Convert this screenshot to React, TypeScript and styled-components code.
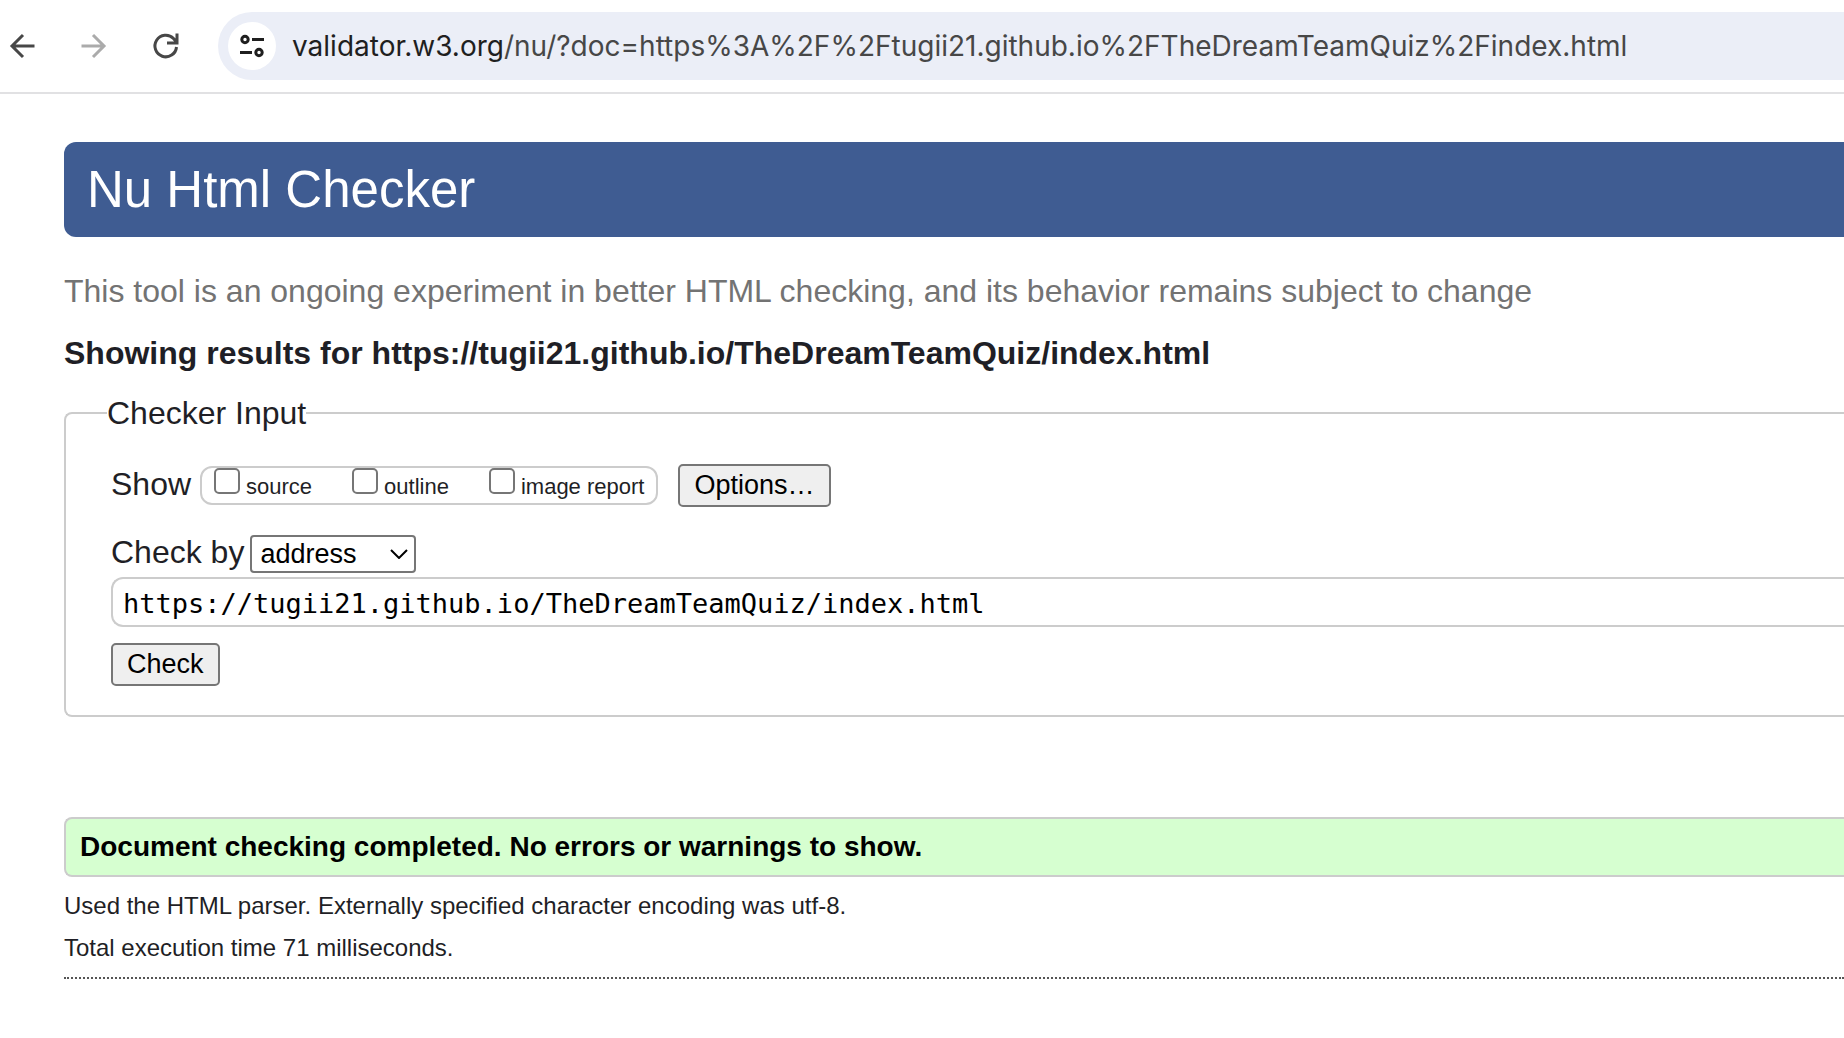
import React from 'react';
import styled, { createGlobalStyle } from 'styled-components';

const GlobalStyle = createGlobalStyle`
  * { box-sizing: border-box; }
  body {
    margin: 0;
    background: #fff;
    color: #1f1f26;
    font-family: "Liberation Sans", Arial, Helvetica, sans-serif;
    font-size: 32px;
    overflow-x: hidden;
  }
`;

const Toolbar = styled.header`
  display: flex;
  align-items: center;
  height: 94px;
  padding-left: 4px;
  border-bottom: 2px solid #e1e1e3;
`;

const Nav = styled.nav`
  display: flex;
  gap: 36px;
  margin-right: 34px;
`;

const NavButton = styled.button`
  display: flex;
  padding: 0;
  border: 0;
  background: none;
  color: ${(p) => (p.disabled ? '#ababab' : '#474747')};
`;

const Omnibox = styled.div`
  flex: 1;
  display: flex;
  align-items: center;
  gap: 16px;
  height: 68px;
  padding-left: 10px;
  border-radius: 34px 0 0 34px;
  background: #ebeef7;
`;

const SiteInfo = styled.button`
  display: flex;
  align-items: center;
  justify-content: center;
  width: 48px;
  height: 48px;
  padding: 0;
  border: 0;
  border-radius: 50%;
  background: #fff;
  color: #1f1f1f;
`;

const Url = styled.div`
  font-family: Inter, Roboto, sans-serif;
  font-size: 28px;
  line-height: 36px;
  white-space: nowrap;
  color: #474747;
`;

const Host = styled.span`
  color: #1f1f1f;
`;

const Page = styled.main`
  padding: 48px 0 48px 64px;
`;

const Title = styled.h1`
  margin: 0;
  padding: 18px 23px 17px;
  border-radius: 12px 0 0 12px;
  background: #3f5c92;
  color: #fff;
  font-size: 51px;
  line-height: 60px;
  font-weight: 400;
`;

const Tagline = styled.p`
  margin: 36px 0 0;
  line-height: 36px;
  color: #737373;
`;

const Subject = styled.h2`
  margin: 26px 0 0;
  font-size: 32px;
  line-height: 36px;
`;

const Panel = styled.fieldset`
  margin: 24px 0 0;
  padding: 33px 0 29px 45px;
  border: 2px solid #ccc;
  border-right: 0;
  border-radius: 8px 0 0 8px;
`;

const Legend = styled.legend`
  margin-left: -4px;
  padding: 0;
  line-height: 36px;
`;

const Row = styled.div`
  display: flex;
  align-items: center;
`;

const ShowRow = styled(Row)`
  height: 43px;
`;

const ModeRow = styled(Row)`
  gap: 6px;
  margin: 28px 0 4px;
`;

const RowLabel = styled.label`
  padding-bottom: 4px;
  line-height: 34px;
`;

const ChoiceGroup = styled.div`
  display: flex;
  gap: 40px;
  height: 39px;
  margin: 0 20px 0 9px;
  padding: 0 12px;
  border: 2px solid #ccc;
  border-radius: 12px;
`;

const Choice = styled.label`
  display: flex;
  gap: 6px;
  font-size: 22px;
  line-height: 37px;
`;

const Box = styled.input`
  appearance: none;
  width: 26px;
  height: 26px;
  margin: 0;
  border: 2px solid #767676;
  border-radius: 5px;
  background: #fff;
`;

const Button = styled.button`
  height: 43px;
  padding: 0 14px 2px;
  border: 2px solid #767676;
  border-radius: 5px;
  background: #efefef;
  color: #000;
  font: 27px/36px "Liberation Sans", Arial, sans-serif;
`;

const SelectWrap = styled.span`
  display: grid;
  align-items: center;
  color: #000;
  > * { grid-area: 1 / 1; }
  > svg { justify-self: end; margin-right: 8px; pointer-events: none; }
`;

const Select = styled.select`
  appearance: none;
  width: 166px;
  height: 38px;
  padding: 0 8px;
  border: 2px solid #767676;
  border-radius: 4px;
  background: #fff;
  color: #000;
  font: 27px/34px "Liberation Sans", Arial, sans-serif;
`;

const Address = styled.input`
  display: block;
  width: 100%;
  height: 50px;
  margin-bottom: 16px;
  padding: 2px 10px 0;
  border: 2px solid #ccc;
  border-right: 0;
  border-radius: 12px 0 0 12px;
  background: #fff;
  color: #000;
  font: 27px/36px "DejaVu Sans Mono", monospace;
`;

const Success = styled.p`
  margin: 100px 0 0;
  padding: 10px 14px;
  border: 2px solid #ccc;
  border-right: 0;
  border-radius: 8px 0 0 8px;
  background: #d6ffd0;
  color: #000;
  font-size: 28px;
  line-height: 36px;
  font-weight: 700;
`;

const Details = styled.div`
  padding: 8px 0;
  border-bottom: 2px dotted #555;
  font-size: 24px;
  line-height: 42px;
  p { margin: 0; }
`;

const Icon = ({ children, size = 36 }: { children: React.ReactNode; size?: number }) => (
  <svg width={size} height={size} viewBox={`0 0 ${size} ${size}`} fill="none" stroke="currentColor" strokeWidth="3" aria-hidden="true">
    {children}
  </svg>
);

const choices = ['source', 'outline', 'image report'];

export default function App() {
  return (
    <>
      <GlobalStyle />
      <Toolbar>
        <Nav>
          <NavButton aria-label="Back">
            <Icon><path d="M30.5 18H8M19 7L8 18l11 11" /></Icon>
          </NavButton>
          <NavButton aria-label="Forward" disabled>
            <Icon><path d="M5.500 18H28M17 7l11 11-11 11" /></Icon>
          </NavButton>
          <NavButton aria-label="Reload">
            <Icon><path d="M28.500 19A10.800 10.800 0 1 1 25.500 10.500L28.500 14M29 5.500V15H19" /></Icon>
          </NavButton>
        </Nav>
        <Omnibox>
          <SiteInfo aria-label="View site information">
            <Icon size={24}>
              <circle cx="5" cy="5.500" r="3.200" />
              <path d="M12 5.500h12M0 18.500h12" />
              <circle cx="19" cy="18.500" r="3.200" />
            </Icon>
          </SiteInfo>
          <Url>
            <Host>validator.w3.org</Host>/nu/?doc=https%3A%2F%2Ftugii21.github.io%2FTheDreamTeamQuiz%2Findex.html
          </Url>
        </Omnibox>
      </Toolbar>
      <Page>
        <Title>Nu Html Checker</Title>
        <Tagline>This tool is an ongoing experiment in better HTML checking, and its behavior remains subject to change</Tagline>
        <Subject>Showing results for https://tugii21.github.io/TheDreamTeamQuiz/index.html</Subject>
        <Panel>
          <Legend>Checker Input</Legend>
          <ShowRow>
            <RowLabel as="span">Show</RowLabel>
            <ChoiceGroup>
              {choices.map((name) => (
                <Choice key={name}>
                  <Box type="checkbox" />
                  {name}
                </Choice>
              ))}
            </ChoiceGroup>
            <Button type="button">Options…</Button>
          </ShowRow>
          <ModeRow>
            <RowLabel htmlFor="mode">Check by</RowLabel>
            <SelectWrap>
              <Select id="mode" defaultValue="address">
                <option value="address">address</option>
                <option value="upload">file upload</option>
                <option value="text">text input</option>
              </Select>
              <svg width="18" height="10" viewBox="0 0 18 10" fill="none" stroke="currentColor" strokeWidth="2" aria-hidden="true">
                <path d="M1 1l8 8 8-8" />
              </svg>
            </SelectWrap>
          </ModeRow>
          <Address aria-label="Address" defaultValue="https://tugii21.github.io/TheDreamTeamQuiz/index.html" />
          <Button type="submit">Check</Button>
        </Panel>
        <Success>Document checking completed. No errors or warnings to show.</Success>
        <Details>
          <p>Used the HTML parser. Externally specified character encoding was utf-8.</p>
          <p>Total execution time 71 milliseconds.</p>
        </Details>
      </Page>
    </>
  );
}
